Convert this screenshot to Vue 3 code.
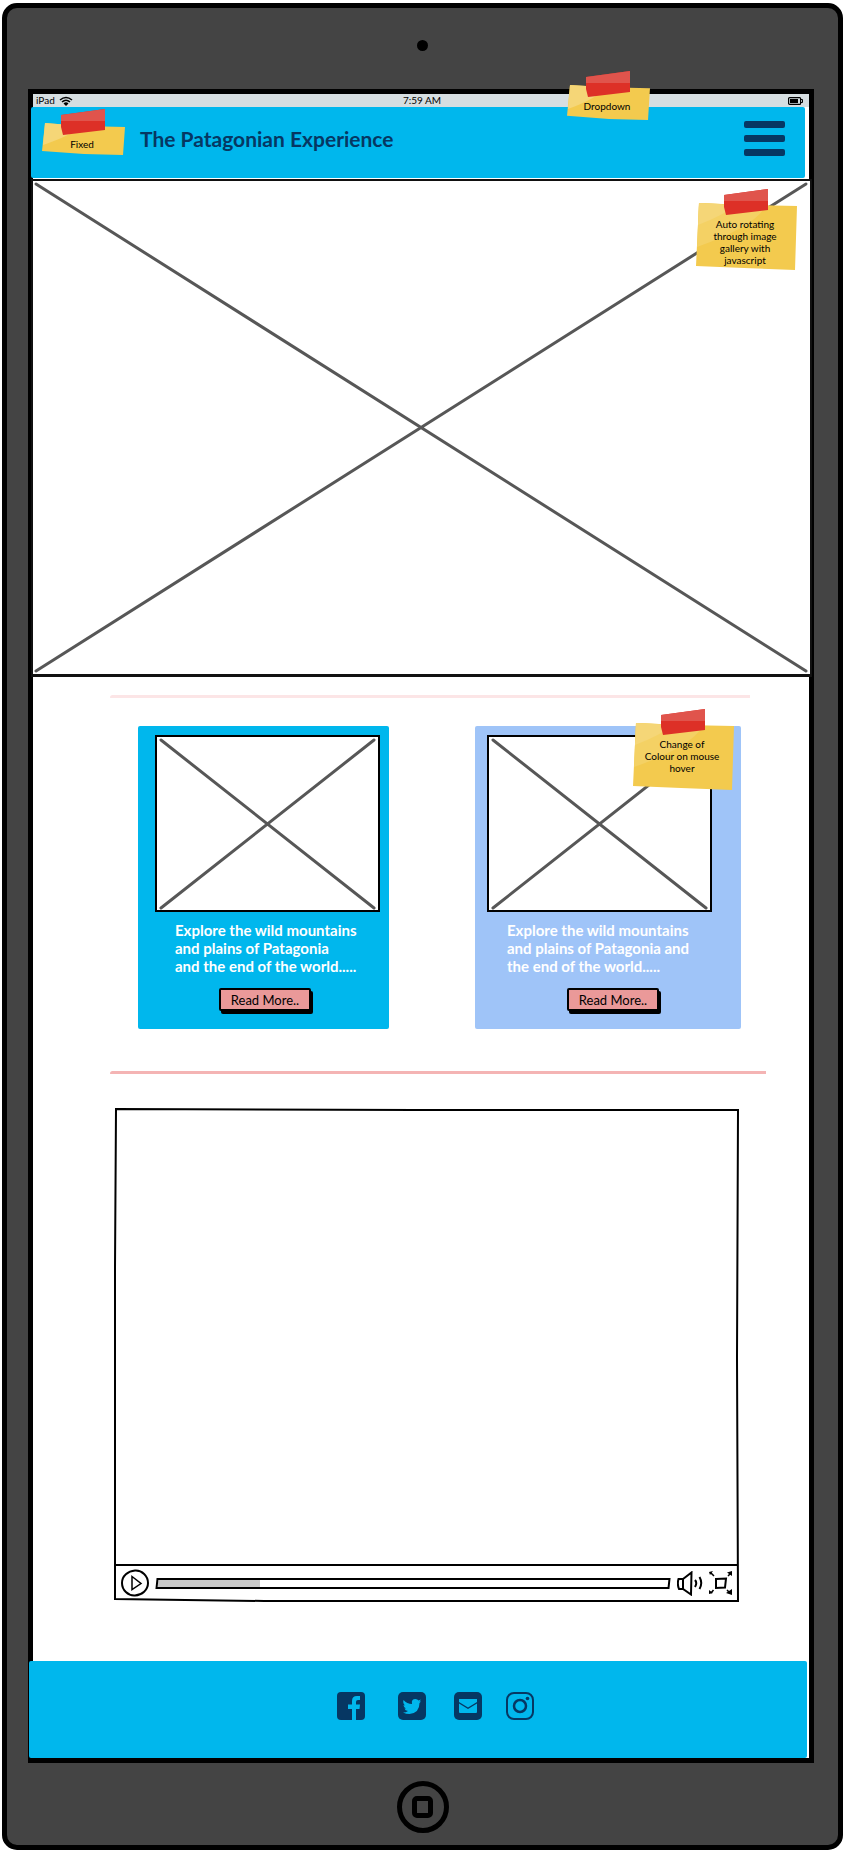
<script setup>
import { ref } from 'vue'

const cards = [
  {
    tone: 'primary',
    text: 'Explore the wild mountains\nand plains of Patagonia\nand the end of the world.....',
    note: null
  },
  {
    tone: 'hovered',
    text: 'Explore the wild mountains\nand plains of Patagonia and\nthe end of the world.....',
    note: 'Change of\nColour on mouse\nhover'
  }
]
const progress = ref(20)
</script>

<template>
  <div class="device">
    <div class="camera"></div>
    <div class="screen">
      <div class="status">
        <span class="carrier">iPad
          <svg class="wifi" viewBox="0 0 14 10" aria-hidden="true">
            <path d="M1 4Q7-1 13 4M3 6Q7 2.500 11 6" fill="none" stroke="#000" stroke-width="1.600" />
            <path d="M4.500 7.500Q7 5 9.500 7.500L7 10z" />
          </svg>
        </span>
        <span>7:59 AM</span>
        <svg class="battery" viewBox="0 0 15 8" aria-hidden="true">
          <rect x=".6" y=".6" width="12" height="6.800" rx="1" fill="none" stroke="#000" stroke-width="1.200" />
          <rect x="2" y="2" width="8" height="4" />
          <path d="M13 2.500h1.500v3H13" fill="none" stroke="#000" />
        </svg>
      </div>

      <header class="header">
        <h1>The Patagonian Experience</h1>
        <button class="menu" type="button" aria-label="Menu"><i></i><i></i><i></i></button>
        <aside class="note small fixed">
          <svg class="paper" viewBox="0 0 83 32" preserveAspectRatio="none"><path d="M3 0L40 3 83 4 81 32 42 31 0 28z" fill="#f3ca4e" /><path d="M3 0L40 3Q30 12 1 22z" fill="#f5d677" /></svg>
          <svg class="tape" viewBox="0 0 44 26"><path d="M0 6L44 0V21L2 26 0 18z" fill="#dd3027" /><path d="M0 6L44 0V12H0z" fill="#e0544c" /></svg>
          <p>Fixed</p>
        </aside>
        <aside class="note small tall dropdown">
          <svg class="paper" viewBox="0 0 83 32" preserveAspectRatio="none"><path d="M3 0L40 2 83 3 81 32 42 31 0 28z" fill="#f3ca4e" /><path d="M3 0L40 2Q30 12 1 22z" fill="#f5d677" /></svg>
          <svg class="tape" viewBox="0 0 44 26"><path d="M0 6L44 0V21L2 26 0 18z" fill="#dd3027" /><path d="M0 6L44 0V12H0z" fill="#e0544c" /></svg>
          <p>Dropdown</p>
        </aside>
      </header>

      <section class="hero">
        <svg class="cross" role="img" aria-label="Image gallery" viewBox="0 0 776 493" preserveAspectRatio="none">
          <path d="M3 3L772 490M772 3L3 490" />
        </svg>
        <aside class="note gallery">
          <svg class="paper" viewBox="0 0 101 67" preserveAspectRatio="none"><path d="M3 0L50 2 101 3 99 67 48 65 0 63z" fill="#f3ca4e" /><path d="M3 0L70 3Q58 24 1 44z" fill="#f4d164" /><path d="M3 0L40 2Q28 12 2 22z" fill="#f5d677" /></svg>
          <svg class="tape" viewBox="0 0 44 26"><path d="M0 6L44 0V21L2 26 0 18z" fill="#dd3027" /><path d="M0 6L44 0V12H0z" fill="#e0544c" /></svg>
          <p>{{ 'Auto rotating\nthrough image\ngallery with\njavascript' }}</p>
        </aside>
      </section>

      <main class="content">
        <hr class="faint" />
        <div class="cards">
          <article v-for="card in cards" :key="card.tone" class="card" :class="card.tone">
            <div class="thumb">
              <svg class="cross" role="img" aria-label="Patagonia" viewBox="0 0 222 173" preserveAspectRatio="none">
                <path d="M4 3L218 171M218 3L4 171" />
              </svg>
            </div>
            <p class="blurb">{{ card.text }}</p>
            <button class="more" type="button">Read More..</button>
            <aside v-if="card.note" class="note change">
              <svg class="paper" viewBox="0 0 101 67" preserveAspectRatio="none"><path d="M3 0L50 2 101 3 99 67 48 65 0 63z" fill="#f3ca4e" /><path d="M3 0L70 3Q58 24 1 44z" fill="#f4d164" /><path d="M3 0L40 2Q28 12 2 22z" fill="#f5d677" /></svg>
              <svg class="tape" viewBox="0 0 44 26"><path d="M0 6L44 0V21L2 26 0 18z" fill="#dd3027" /><path d="M0 6L44 0V12H0z" fill="#e0544c" /></svg>
              <p>{{ card.note }}</p>
            </aside>
          </article>
        </div>
        <hr />

        <section class="player" aria-label="Video">
          <svg class="outline" viewBox="0 0 625 494" preserveAspectRatio="none" aria-hidden="true">
            <path d="M2 1L300 2 624 2 623 250 624 493 150 493 1 491 1 160z" />
          </svg>
          <div class="picture"></div>
          <div class="controls">
            <button type="button" aria-label="Play">
              <svg width="28" height="28" viewBox="0 0 28 28"><path d="M14 1.500C21 1 27 7 27 14S21 26 14 26.500 1 21 1 14 7 2 14 1.500z" /><path d="M11 7.500L20 14.500 11 20.500z" stroke-width="1.500" /></svg>
            </button>
            <input v-model="progress" type="range" min="0" max="100" aria-label="Position" :style="{ '--played': progress + '%' }" />
            <button type="button" aria-label="Volume">
              <svg width="27" height="25" viewBox="0 0 27 25"><path d="M1.500 8Q0 13 2 18H6L14 23.500 14.500 1.500 6 8zM6 8V18M1.500 8H6" /><path d="M18 9Q20.500 12 18 16M22.500 6Q26 12 22.500 18" /></svg>
            </button>
            <button type="button" aria-label="Full screen">
              <svg width="24" height="24" viewBox="0 0 24 24"><path d="M7 8L17 7.500 16 16.500 7 17z" /><path d="M5 5L1.500 1.500M19 5L22 2M4.500 19L2 22M18 19L21 22" stroke-width="1.500" /><path d="M0 1L4 0 1 4zM23 0L18 1.500 23 5zM0 19L4 22 0 23zM23 18V24L17 22z" fill="#000" stroke="none" /></svg>
            </button>
          </div>
        </section>
      </main>

      <footer class="footer">
        <a href="#facebook" aria-label="Facebook">
          <svg viewBox="0 0 28 28"><rect width="28" height="28" rx="4" /><path class="cut" d="M15 28V17H11V12.500H15V9Q15 4 20 4H23V8H21Q19 8 19 10V12.500H23L22.500 17H19V28z" /></svg>
        </a>
        <a href="#twitter" aria-label="Twitter">
          <svg viewBox="0 0 28 28"><rect width="28" height="28" rx="5" /><path class="cut" d="M5.500 8Q9 12 14 12Q13 7 17.500 7Q19.500 7 20.500 8.500L23 7.500 21.500 9.500 23 9.500 21.500 11Q21.500 21 11.500 22Q8 22 5 20.500Q8 20.500 10 19Q7 18.500 6.500 16.500H8Q5.500 15 5.500 13L7 13.500Q4.500 11 5.500 8z" /></svg>
        </a>
        <a href="#mail" aria-label="Mail">
          <svg viewBox="0 0 28 28"><rect width="28" height="28" rx="5" /><path class="cut" d="M5 7H23V10L14 15.500 5 10zM5 11.500L14 17 23 11.500V20Q23 21 22 21H6Q5 21 5 20z" /></svg>
        </a>
        <a href="#instagram" aria-label="Instagram">
          <svg viewBox="0 0 28 28"><g fill="none" stroke="#063763"><rect x="1" y="1" width="26" height="26" rx="7" stroke-width="2" /><circle cx="14" cy="14" r="6" stroke-width="2.500" /></g><circle cx="21.500" cy="6.500" r="1.800" /></svg>
        </a>
      </footer>
    </div>
    <button class="home" type="button" aria-label="Home"><i></i></button>
  </div>
</template>

<style>
body {
  background: #fff;
}
</style>

<style scoped>
* {
  box-sizing: border-box;
}
.device {
  display: flex;
  flex-direction: column;
  margin: 3px 2px 2px;
  padding-bottom: 12px;
  border: 5px solid #000;
  border-radius: 15px;
  background: #444;
  color: #000;
  font-family: Lato, sans-serif;
}
h1,
p {
  margin: 0;
}
button {
  padding: 0;
  border: 0;
  background: none;
  color: inherit;
  font: inherit;
  cursor: pointer;
}
svg {
  display: block;
}
.camera {
  width: 11px;
  height: 11px;
  margin: 32px auto 38px;
  border-radius: 50%;
  background: #000;
}
.screen {
  margin: 0 24px 0 21px;
  border: 5px solid #000;
  background: #fff;
}
.status {
  display: grid;
  grid-template-columns: 1fr auto 1fr;
  align-items: center;
  height: 13px;
  padding: 0 6px 0 8px;
  background: #d6dee1;
  font-size: 10px;
  line-height: 13px;
}
.carrier {
  display: flex;
  align-items: center;
  gap: 4px;
  margin-left: -5px;
}
.wifi {
  width: 14px;
  height: 10px;
}
.battery {
  width: 15px;
  height: 8px;
  justify-self: end;
}
.header {
  position: relative;
  display: flex;
  align-items: center;
  justify-content: space-between;
  height: 71px;
  margin: 0 4px 0 -2px;
  padding: 0 20px 8px 109px;
  border-radius: 2px;
  background: #00b7ed;
}
h1 {
  color: #063763;
  font-size: 21px;
  line-height: 24px;
}
.menu {
  display: flex;
  flex-direction: column;
  gap: 7px;
}
.menu i {
  width: 41px;
  height: 7px;
  border-radius: 2px;
  background: #063763;
}
.note {
  position: absolute;
  width: 101px;
  height: 81px;
  padding: 29px 3px 0 0;
  font-size: 10px;
  line-height: 12px;
  text-align: center;
  white-space: pre-line;
}
.note p {
  position: relative;
}
.paper {
  position: absolute;
  top: 14px;
  left: 0;
  width: 100%;
  height: calc(100% - 14px);
}
.tape {
  position: absolute;
  top: 0;
  left: 28px;
  width: 44px;
  height: 26px;
}
.small {
  width: 83px;
  height: 46px;
}
.small .tape {
  left: 19px;
}
.tall {
  height: 49px;
}
.fixed {
  top: 2px;
  left: 11px;
}
.dropdown {
  top: -36px;
  right: 155px;
}
.hero {
  position: relative;
  aspect-ratio: 781 / 498;
  margin: 1px -3px 0 -2px;
  border: 2px solid #111;
  border-bottom-width: 3px;
  background: #fff;
}
.cross {
  width: 100%;
  height: 100%;
  fill: none;
  stroke: #575757;
  stroke-width: 3px;
  stroke-linecap: round;
}
.gallery {
  top: 8px;
  right: 13px;
}
.content {
  padding: 18px 43px 59px 77px;
}
hr {
  height: 3px;
  margin: 0;
  border: 0;
  border-radius: 12px 0 0 2px;
  background: #f4b4b4;
}
.faint {
  margin-right: 16px;
  background: #fce5e6;
}
.cards {
  display: grid;
  grid-template-columns: 251fr 266fr;
  gap: 86px;
  margin: 28px 25px 42px 28px;
}
.card {
  position: relative;
  display: flex;
  flex-direction: column;
  padding: 9px 9px 18px 17px;
  border-radius: 2px;
  background: #00b7ed;
}
.hovered {
  padding: 9px 29px 18px 12px;
  background: #9fc4f8;
}
.thumb {
  aspect-ratio: 225 / 177;
  border: 2px solid #000;
  background: #fff;
}
.blurb {
  margin: 9px 0 13px 20px;
  color: #fff;
  font-size: 15px;
  font-weight: 700;
  line-height: 18px;
  white-space: pre-line;
}
.more {
  width: 92px;
  height: 23px;
  margin-left: 64px;
  border: 2px solid #000;
  border-radius: 2px;
  background: #ea9999;
  box-shadow: 2px 3px 0 #000;
  font-size: 13px;
}
.hovered .more {
  margin-left: 80px;
}
.change {
  top: -17px;
  right: 7px;
}
.player {
  position: relative;
  display: flex;
  flex-direction: column;
  aspect-ratio: 625 / 494;
  margin: 34px 27px 0 4px;
}
.outline {
  position: absolute;
  width: 100%;
  height: 100%;
  fill: none;
  stroke: #000;
  stroke-width: 2px;
  pointer-events: none;
}
.picture {
  flex: 1;
}
.controls {
  display: flex;
  align-items: center;
  gap: 5px;
  height: 38px;
  margin: 0 1px;
  padding: 0 5px 2px 6px;
  border-top: 2px solid #000;
}
.controls svg {
  fill: none;
  stroke: #000;
  stroke-width: 2px;
}
input {
  flex: 1;
  min-width: 0;
  height: 11px;
  margin: 0 2px;
  border: 2px solid #000;
  border-radius: 0;
  background: linear-gradient(90deg, #c9c9c9 var(--played), #fff var(--played));
  appearance: none;
  transform: skewX(-6deg);
}
input::-webkit-slider-thumb {
  width: 1px;
  height: 7px;
  appearance: none;
}
.footer {
  display: flex;
  justify-content: center;
  gap: 28px;
  margin: 0 2px 0 -4px;
  padding: 31px 0 38px 34px;
  border-radius: 2px;
  background: #00b7ed;
}
.footer svg {
  width: 28px;
  height: 28px;
  fill: #063763;
}
.footer a:first-child {
  margin-right: 5px;
}
.footer a:last-child {
  margin-left: -4px;
}
.footer .cut {
  fill: #00b7ed;
}
.home {
  display: grid;
  place-items: center;
  width: 52px;
  height: 52px;
  margin: 18px auto 0;
  border: 5px solid #000;
  border-radius: 50%;
}
.home i {
  width: 21px;
  height: 22px;
  border: 5px solid #000;
  border-radius: 5px;
}
</style>
